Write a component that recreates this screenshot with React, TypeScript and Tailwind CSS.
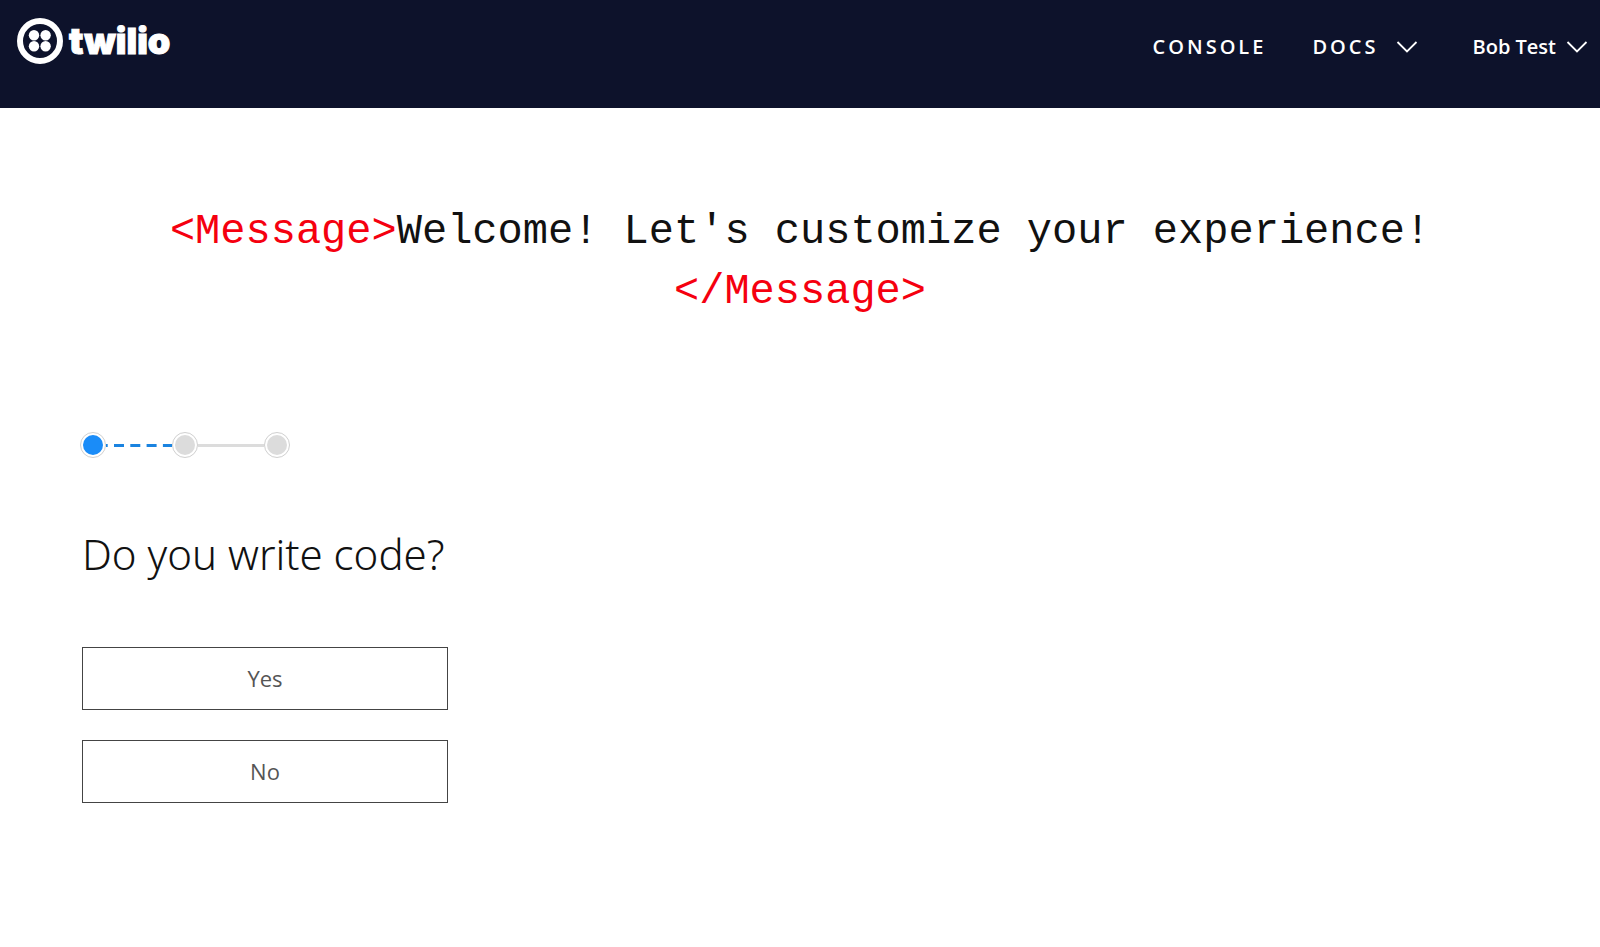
import { useState } from 'react';
import { clsx } from 'clsx';

const answers = ['Yes', 'No'];

function TwilioMark() {
  return (
    <svg viewBox="0 0 46 46" className="size-[46px]" aria-hidden="true">
      <circle cx="23" cy="23" r="20" fill="none" stroke="#fff" strokeWidth="6" />
      <g fill="#fff">
        <circle cx="17" cy="17.2" r="5.2" />
        <circle cx="28.6" cy="17.2" r="5.2" />
        <circle cx="17" cy="28.2" r="5.2" />
        <circle cx="28.6" cy="28.2" r="5.2" />
      </g>
    </svg>
  );
}

function Chevron() {
  return (
    <svg viewBox="0 0 22 12" className="h-3 w-[22px]" fill="none" stroke="#fff" strokeWidth="1.8" aria-hidden="true">
      <path d="M1.5 1 11 10.5 20.5 1" />
    </svg>
  );
}

function Header() {
  return (
    <header className="flex h-[108px] items-start justify-between bg-[#0d122b] pt-[18px] pr-3 pl-[17px] text-white">
      <a href="#" className="flex items-center gap-1.5">
        <TwilioMark />
        <span className="font-[Inter] text-4xl leading-[46px] font-black [-webkit-text-stroke:1px_#fff]">twilio</span>
      </a>
      <nav className="flex items-center pt-3 font-['Open_Sans',sans-serif] text-[20px] leading-[34px] font-semibold">
        <a href="#" className="mr-[46px] tracking-[3px]">CONSOLE</a>
        <button type="button" className="mr-[54px] flex items-center gap-[18px]">
          <span className="tracking-[3px]">DOCS</span>
          <Chevron />
        </button>
        <button type="button" className="flex items-center gap-2.5">
          Bob Test
          <Chevron />
        </button>
      </nav>
    </header>
  );
}

function StepDot({ active = false }: { active?: boolean }) {
  return (
    <li className="flex size-[26px] items-center justify-center rounded-full border border-[#d0d0d0] bg-white">
      <span className={clsx('size-5 rounded-full', active ? 'bg-[#1a8cf8]' : 'bg-[#dcdcdc]')} />
    </li>
  );
}

function Stepper() {
  return (
    <ol className="flex items-center">
      <StepDot active />
      <li aria-hidden="true">
        <svg viewBox="0 0 66 3" className="h-[3px] w-[66px]">
          <path d="M0 1.5H66" stroke="#1a83e0" strokeWidth="3" strokeDasharray="10 6.3" strokeDashoffset="8.3" />
        </svg>
      </li>
      <StepDot />
      <li aria-hidden="true" className="h-[3px] w-[66px] bg-[#dcdcdc]" />
      <StepDot />
    </ol>
  );
}

export default function App() {
  const [answer, setAnswer] = useState<string | null>(null);

  return (
    <div className="min-h-screen bg-white">
      <Header />
      <main className="px-20 pt-[94px] pb-20">
        <h1 className="text-center font-['Liberation_Mono',monospace] text-[42px] leading-[60px] text-[#111]">
          <span className="text-[#f5000f]">&lt;Message&gt;</span>
          Welcome! Let&#39;s customize your experience!
          <br />
          <span className="text-[#f5000f]">&lt;/Message&gt;</span>
        </h1>

        <div className="mt-[110px]">
          <Stepper />
        </div>

        <div className="pl-0.5">
          <h2 className="mt-[66px] font-['Noto_Sans',sans-serif] text-[42px] leading-[60px] font-[350] text-[#111]">
            Do you write code?
          </h2>

          <div className="mt-[63px] flex w-[366px] flex-col gap-[30px]">
            {answers.map((label) => (
              <button
                key={label}
                type="button"
                aria-pressed={answer === label}
                onClick={() => setAnswer(label)}
                className="h-[63px] border border-[#444] font-['Open_Sans',sans-serif] text-[22px] text-[#555]"
              >
                {label}
              </button>
            ))}
          </div>
        </div>
      </main>
    </div>
  );
}
